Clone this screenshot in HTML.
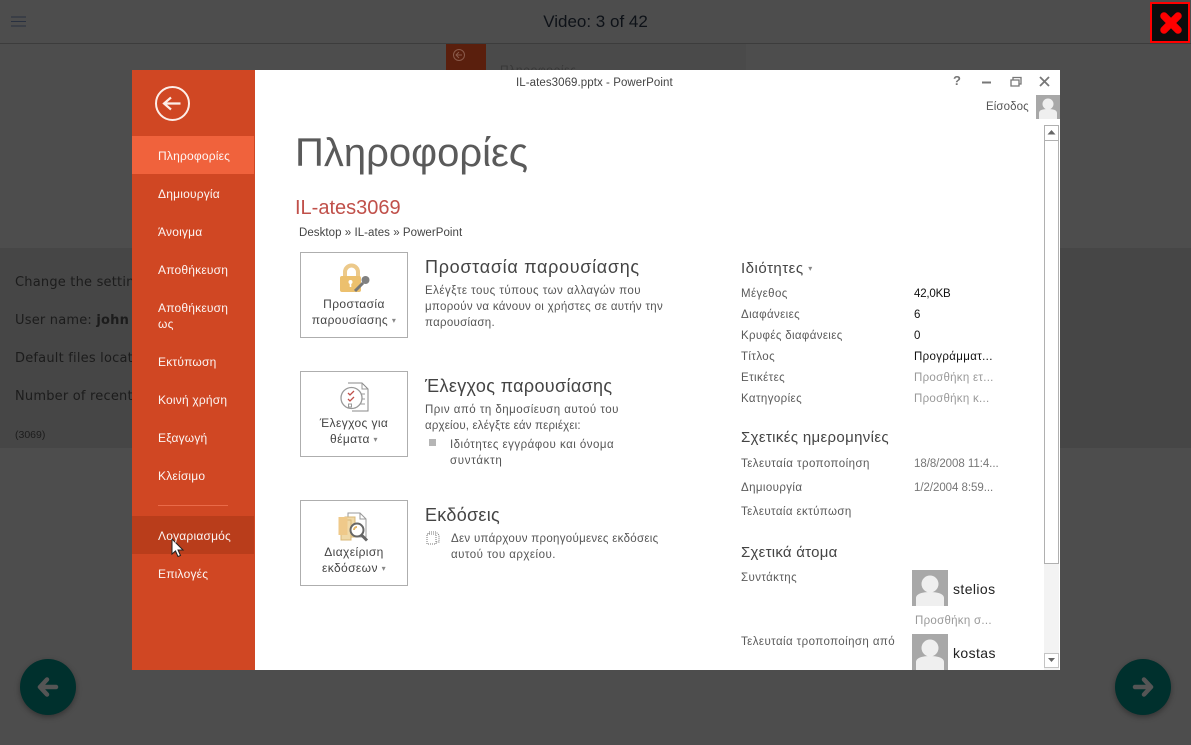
<!DOCTYPE html>
<html><head><meta charset="utf-8"><style>
html,body{margin:0;padding:0;width:1191px;height:745px;overflow:hidden;background:#4d4d4d}
body{position:relative;font-family:"Liberation Sans",sans-serif}
.t{position:absolute;white-space:nowrap;line-height:16px}
.m{color:#fff;font-size:12px;letter-spacing:.2px;opacity:.95}
.l{color:#5a5a5a;font-size:11.5px;letter-spacing:.4px}
.v{color:#111;font-size:11.5px;letter-spacing:.2px}
.g{color:#999;font-size:11.5px;letter-spacing:.28px}
.h{color:#444;font-size:18px;letter-spacing:.55px;line-height:22px}
.s{color:#444;font-size:15px;letter-spacing:.4px;line-height:20px}
.d{color:#555;font-size:11.5px;letter-spacing:.48px}
.b{position:absolute;left:300px;width:106px;border:1px solid #aeaeae;background:#fff}
.c{color:#444;font-size:12px;letter-spacing:.4px;text-align:center;left:300px;width:108px}
.c span{font-size:8px;color:#888;vertical-align:1px}
.bg{color:#1c1c1c;font-family:"DejaVu Sans",sans-serif;font-size:13px;letter-spacing:.2px}
</style></head><body>
<div style="position:absolute;left:0;top:43px;width:1191px;height:1px;background:#3c3c3c"></div>
<div style="position:absolute;left:0;top:248px;width:1191px;height:200px;background:#464646"></div>
<svg style="position:absolute;left:11px;top:16px" width="16" height="12"><path d="M0 1h15M0 5.500h15M0 10h15" stroke="#283040" stroke-width="1"/></svg>
<div class="t" style="left:420px;width:351px;top:12px;text-align:center;font-size:17px;line-height:20px;color:#0e1218">Video: 3 of 42</div>
<div style="position:absolute;left:1150px;top:2px;width:36px;height:37px;border:2px solid #f00;background:#0c0c0c"></div>
<svg style="position:absolute;left:1159px;top:11px" width="24" height="24" viewBox="0 0 24 24"><path d="M5 5L19 19M19 5L5 19" stroke="#f00" stroke-width="7.500" stroke-linecap="round"/></svg>
<div style="position:absolute;left:446px;top:44px;width:300px;height:26px;background:#4a4a4a"></div>
<div style="position:absolute;left:446px;top:44px;width:40px;height:26px;background:#5a1f0d"></div>
<svg style="position:absolute;left:451px;top:47px" width="16" height="16"><circle cx="8" cy="8" r="5.500" fill="none" stroke="#8a5a4a"/><path d="M5 8h6M8 5L5 8l3 3" fill="none" stroke="#8a5a4a"/></svg>
<div class="t" style="left:500px;top:62px;font-size:12px;letter-spacing:.6px;color:#383838">Πληροφορίες</div>
<div class="t bg" style="left:15px;top:275px">Change the settin</div>
<div class="t bg" style="left:15px;top:313px">User name: <b>john</b></div>
<div class="t bg" style="left:15px;top:351px">Default files locat</div>
<div class="t bg" style="left:15px;top:389px">Number of recent</div>
<div class="t" style="left:15px;top:427px;font-size:10.500px;color:#1c1c1c">(3069)</div>
<div style="position:absolute;left:20px;top:659px;width:56px;height:56px;border-radius:50%;background:#00302d;box-shadow:0 2px 6px rgba(0,0,0,.35)"></div>
<svg style="position:absolute;left:36px;top:675px" width="24" height="24"><path d="M20 12H4M11 4.500L4 12l7 7.500" fill="none" stroke="#555" stroke-width="4.500" stroke-linecap="round" stroke-linejoin="round"/></svg>
<div style="position:absolute;left:1115px;top:659px;width:56px;height:56px;border-radius:50%;background:#00302d;box-shadow:0 2px 6px rgba(0,0,0,.35)"></div>
<svg style="position:absolute;left:1131px;top:675px" width="24" height="24"><path d="M4 12H20M13 4.500L20 12l-7 7.500" fill="none" stroke="#555" stroke-width="4.500" stroke-linecap="round" stroke-linejoin="round"/></svg>

<div style="position:absolute;left:132px;top:70px;width:928px;height:600px;background:#fff;overflow:hidden">
<div style="position:absolute;left:0;top:0;width:123px;height:600px;background:#d04723"></div>
<div style="position:absolute;left:0;top:66px;width:122px;height:38px;background:#f0623c"></div>
<div style="position:absolute;left:0;top:446px;width:122px;height:38px;background:#b93d1b"></div>
<div style="position:absolute;left:26px;top:435px;width:70px;height:1px;background:#ea6a48"></div>
<svg style="position:absolute;left:22px;top:15px" width="36" height="36"><circle cx="18.500" cy="18.500" r="16.500" fill="none" stroke="#fdeee8" stroke-width="2"/><path d="M26.500 18.500H10M17 12.500l-7 6 7 6" fill="none" stroke="#fdeee8" stroke-width="2.200"/></svg>
<svg style="position:absolute;left:39px;top:468px" width="14" height="20"><path d="M1 1v15l3.500-3 2.500 5.500 2.500-1-2.500-5.500H12z" fill="#fff" stroke="#222" stroke-width="1"/></svg>
<svg style="position:absolute;left:904px;top:0" width="24" height="56"><rect y="25" width="24" height="24" fill="#a8a8a8"/><circle cx="12" cy="34" r="5.500" fill="#efefef"/><path d="M3 49v-6c0-3 4-4 9-4s9 1 9 4v6z" fill="#efefef"/></svg>
</div>

<div class="t" style="left:516px;top:75px;font-size:11.500px;letter-spacing:.07px;color:#444">IL-ates3069.pptx - PowerPoint</div>
<div class="t" style="left:953px;top:73px;font-size:13px;font-weight:bold;color:#777">?</div>
<svg style="position:absolute;left:980px;top:75px" width="76" height="14"><path d="M2 7.500h9" stroke="#777" stroke-width="2"/><path d="M31 5h8v6h-8zM33 5V2.500h8V9h-2" fill="none" stroke="#777" stroke-width="1.300"/><path d="M60 2l9 9M69 2l-9 9" stroke="#777" stroke-width="1.800"/></svg>
<div class="t" style="left:986px;top:99px;font-size:11.500px;letter-spacing:.1px;color:#555">Είσοδος</div>

<div style="position:absolute;left:1044px;top:125px;width:15px;height:545px;background:#f3f3f3"></div>
<div style="position:absolute;left:1044px;top:125px;width:13px;height:14px;border:1px solid #b0b0b0;background:#fff"></div>
<div style="position:absolute;left:1044px;top:140px;width:13px;height:422px;border:1px solid #b0b0b0;background:#fff"></div>
<div style="position:absolute;left:1044px;top:653px;width:13px;height:13px;border:1px solid #c4c4c4;background:#fff"></div>
<svg style="position:absolute;left:1044px;top:125px" width="15" height="545"><path d="M3.500 9.500L7.500 5l4 4.500z" fill="#666"/><path d="M4 533h7l-3.500 4z" fill="#666"/></svg>

<div class="t m" style="left:158px;top:148px">Πληροφορίες</div>
<div class="t m" style="left:158px;top:186px">Δημιουργία</div>
<div class="t m" style="left:158px;top:224px">Άνοιγμα</div>
<div class="t m" style="left:158px;top:262px">Αποθήκευση</div>
<div class="t m" style="left:158px;top:300px">Αποθήκευση</div>
<div class="t m" style="left:158px;top:316px">ως</div>
<div class="t m" style="left:158px;top:354px">Εκτύπωση</div>
<div class="t m" style="left:158px;top:392px">Κοινή χρήση</div>
<div class="t m" style="left:158px;top:430px">Εξαγωγή</div>
<div class="t m" style="left:158px;top:468px">Κλείσιμο</div>
<div class="t m" style="left:158px;top:528px">Λογαριασμός</div>
<div class="t m" style="left:158px;top:566px">Επιλογές</div>

<div class="t" style="left:295px;top:130px;font-size:40px;line-height:46px;letter-spacing:0;color:#5a5a5a">Πληροφορίες</div>
<div class="t" style="left:295px;top:196px;font-size:20px;line-height:24px;color:#c0504a">IL-ates3069</div>
<div class="t" style="left:299px;top:225px;font-size:11.500px;letter-spacing:.05px;color:#444">Desktop » IL-ates » PowerPoint</div>

<div class="b" style="top:252px;height:84px"></div>
<div class="b" style="top:371px;height:84px"></div>
<div class="b" style="top:500px;height:84px"></div>
<svg style="position:absolute;left:338px;top:262px" width="36" height="34"><path d="M7 15V10a6.500 6.500 0 0 1 13 0v5" fill="none" stroke="#ecc98a" stroke-width="4"/><rect x="2" y="14" width="21" height="16" rx="2" fill="#ecc06e"/><circle cx="12.500" cy="20" r="2" fill="#fff"/><path d="M12.500 20v5" stroke="#fff" stroke-width="1.600"/><path d="M17 29l8-8" stroke="#777" stroke-width="3"/><circle cx="27.500" cy="18" r="4" fill="#808080"/></svg>
<svg style="position:absolute;left:338px;top:381px" width="34" height="36"><path d="M10 2h14l6 6v22H14" fill="#fff" stroke="#888"/><path d="M24 2v6h6M21 13h6M21 18h6M21 23h6" fill="none" stroke="#999"/><circle cx="13.500" cy="17" r="10.500" fill="#fff" stroke="#999" stroke-width="1.300"/><path d="M10 12l2 2 4-4M10 18l2 2 4-4" fill="none" stroke="#c0504a" stroke-width="1.300"/><rect x="10.500" y="23" width="3" height="3" fill="none" stroke="#999"/></svg>
<svg style="position:absolute;left:338px;top:511px" width="34" height="36"><path d="M10 2h12l6 6v18H10z" fill="#fff" stroke="#999"/><path d="M22 2v6h6" fill="none" stroke="#999"/><rect x="7" y="6" width="10" height="20" fill="#f0d9a8" stroke="#d8b878"/><rect x="3" y="9" width="10" height="20" fill="#f0d9a8" stroke="#d8b878"/><rect x="0.500" y="6" width="9" height="18" fill="#efc98a"/><circle cx="19" cy="19" r="6.500" fill="#fff" stroke="#666" stroke-width="2"/><path d="M23.500 24L29 29.500" stroke="#666" stroke-width="3"/><path d="M16 19a3 3 0 0 1 3-3" stroke="#e2b66a" stroke-width="2" fill="none"/></svg>

<div class="t c" style="top:296px">Προστασία</div>
<div class="t c" style="top:312px">παρουσίασης <span>▾</span></div>
<div class="t c" style="top:415px">Έλεγχος για</div>
<div class="t c" style="top:431px">θέματα <span>▾</span></div>
<div class="t c" style="top:544px">Διαχείριση</div>
<div class="t c" style="top:560px">εκδόσεων <span>▾</span></div>

<div class="t h" style="left:425px;top:256px;letter-spacing:.7px">Προστασία παρουσίασης</div>
<div class="t d" style="left:425px;top:283px">Ελέγξτε τους τύπους των αλλαγών που</div>
<div class="t d" style="left:425px;top:299px;letter-spacing:.3px">μπορούν να κάνουν οι χρήστες σε αυτήν την</div>
<div class="t d" style="left:425px;top:315px;letter-spacing:.3px">παρουσίαση.</div>
<div class="t h" style="left:425px;top:375px;letter-spacing:.35px">Έλεγχος παρουσίασης</div>
<div class="t d" style="left:425px;top:402px">Πριν από τη δημοσίευση αυτού του</div>
<div class="t d" style="left:425px;top:418px;letter-spacing:.17px">αρχείου, ελέγξτε εάν περιέχει:</div>
<div style="position:absolute;left:429px;top:439px;width:7px;height:7px;background:#b5b5b5"></div>
<div class="t d" style="left:450px;top:437px">Ιδιότητες εγγράφου και όνομα</div>
<div class="t d" style="left:450px;top:453px;letter-spacing:.7px">συντάκτη</div>
<div class="t h" style="left:425px;top:504px;letter-spacing:.3px">Εκδόσεις</div>
<svg style="position:absolute;left:426px;top:531px" width="14" height="14"><path d="M1 3h9v10H1zM3 3V1h7l3 3v7h-3" fill="none" stroke="#777" stroke-dasharray="1 1"/></svg>
<div class="t d" style="left:451px;top:531px;letter-spacing:.3px">Δεν υπάρχουν προηγούμενες εκδόσεις</div>
<div class="t d" style="left:451px;top:547px">αυτού του αρχείου.</div>

<div class="t s" style="left:741px;top:259px;letter-spacing:.5px">Ιδιότητες <span style="font-size:8px;color:#888;vertical-align:2px">▾</span></div>
<div class="t l" style="left:741px;top:286px">Μέγεθος</div><div class="t v" style="left:914px;top:286px;letter-spacing:-.2px">42,0KB</div>
<div class="t l" style="left:741px;top:307px">Διαφάνειες</div><div class="t v" style="left:914px;top:307px">6</div>
<div class="t l" style="left:741px;top:328px;letter-spacing:.35px">Κρυφές διαφάνειες</div><div class="t v" style="left:914px;top:328px">0</div>
<div class="t l" style="left:741px;top:349px">Τίτλος</div><div class="t v" style="left:914px;top:349px;letter-spacing:.35px">Προγράμματ...</div>
<div class="t l" style="left:741px;top:370px">Ετικέτες</div><div class="t g" style="left:914px;top:370px">Προσθήκη ετ...</div>
<div class="t l" style="left:741px;top:391px">Κατηγορίες</div><div class="t g" style="left:914px;top:391px">Προσθήκη κ...</div>
<div class="t s" style="left:741px;top:428px;letter-spacing:.35px">Σχετικές ημερομηνίες</div>
<div class="t l" style="left:741px;top:456px;letter-spacing:.45px">Τελευταία τροποποίηση</div><div class="t l" style="left:914px;top:456px;color:#777;letter-spacing:-.05px">18/8/2008 11:4...</div>
<div class="t l" style="left:741px;top:480px">Δημιουργία</div><div class="t l" style="left:914px;top:480px;color:#777;letter-spacing:-.05px">1/2/2004 8:59...</div>
<div class="t l" style="left:741px;top:504px">Τελευταία εκτύπωση</div>
<div class="t s" style="left:741px;top:543px;letter-spacing:.25px">Σχετικά άτομα</div>
<div class="t l" style="left:741px;top:570px">Συντάκτης</div>
<svg style="position:absolute;left:912px;top:570px" width="36" height="100"><rect width="36" height="36" fill="#a8a8a8"/><circle cx="18" cy="14" r="8.500" fill="#efefef"/><path d="M4 36v-8c0-4 6-6 14-6s14 2 14 6v8z" fill="#efefef"/><rect y="64" width="36" height="36" fill="#a8a8a8"/><circle cx="18" cy="78" r="8.500" fill="#efefef"/><path d="M4 100v-8c0-4 6-6 14-6s14 2 14 6v8z" fill="#efefef"/></svg>
<div class="t" style="left:953px;top:581px;font-size:14px;letter-spacing:.4px;color:#222">stelios</div>
<div class="t g" style="left:915px;top:613px">Προσθήκη σ...</div>
<div class="t l" style="left:741px;top:634px;letter-spacing:.42px">Τελευταία τροποποίηση από</div>
<div class="t" style="left:953px;top:645px;font-size:14px;letter-spacing:.4px;color:#222">kostas</div>
</body></html>
